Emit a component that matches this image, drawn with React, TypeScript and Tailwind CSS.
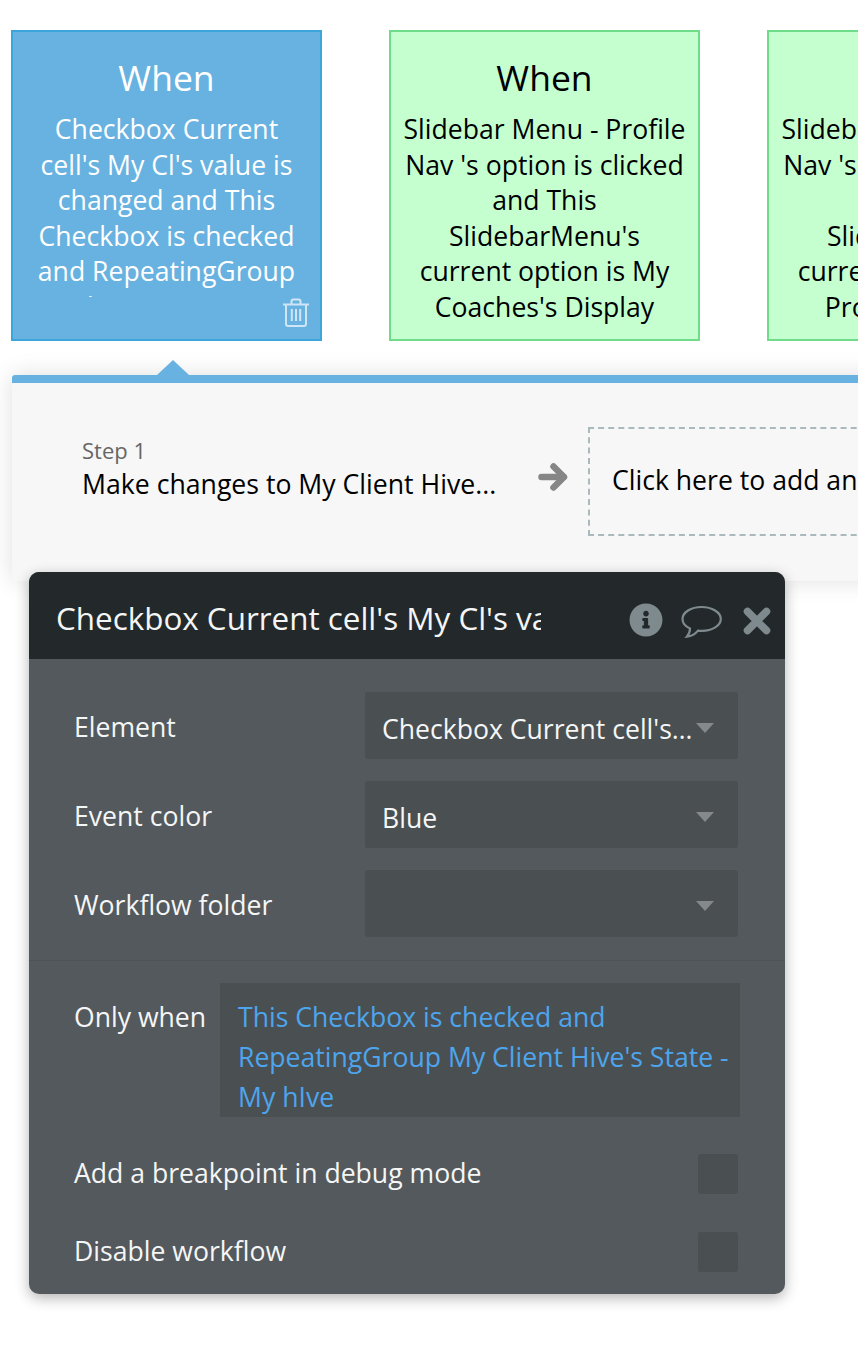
import { FaInfoCircle } from "react-icons/fa";

const cards = [
  {
    lines: ["Slidebar Menu - Profile", "Nav 's option is clicked", "and This", "SlidebarMenu's", "current option is My", "Coaches's Display"],
  },
  {
    lines: ["Slidebar Menu - Profile", "Nav 's option is clicked", "and This", "SlidebarMenu's", "current option is My", "Profile's Display"],
  },
];

function Trash() {
  return (
    <svg viewBox="0 0 26 29" className="absolute right-[11px] bottom-[12px] h-[29px] w-[26px]" fill="none" stroke="#cfe5f4" strokeWidth="2">
      <path d="M0 6.5h26" />
      <path d="M8.5 6V3.2c0-1 .8-1.7 1.7-1.7h5.6c.9 0 1.7.7 1.7 1.7V6" />
      <path d="M3 6.5v19.3c0 1.2 1 2.2 2.2 2.2h15.6c1.2 0 2.2-1 2.2-2.2V6.5" />
      <path d="M8.8 11v12M13 11v12M17.2 11v12" />
    </svg>
  );
}

function Select({ label, value }: { label: string; value?: string }) {
  return (
    <div className="flex h-[67px] items-center justify-between">
      <span className="pt-[4px] text-[26.6px] text-[#f5f6f6]">{label}</span>
      <div className="flex h-[67px] w-[373px] items-center justify-between rounded-[3px] bg-[#4a4f52] pr-[24px] pl-[17px]">
        <span className="min-w-0 truncate pt-[8px] text-[26.6px] text-[#f5f6f6]">{value}</span>
        <span className="mt-[4px] ml-[2px] h-0 w-0 shrink-0 border-x-[9px] border-t-[10px] border-x-transparent border-t-[#85898b]" />
      </div>
    </div>
  );
}

function Check({ label }: { label: string }) {
  return (
    <div className="flex h-[40px] items-center justify-between">
      <span className="text-[26.6px] text-[#f5f6f6]">{label}</span>
      <div className="h-[40px] w-[40px] rounded-[3px] bg-[#4a4f52]" />
    </div>
  );
}

export default function App() {
  return (
    <div className="h-[1372px] w-[858px] overflow-hidden bg-white font-['Open_Sans',sans-serif]">
      <div className="flex gap-[67px] pt-[30px] pl-[11px]">
        <div className="relative h-[311px] w-[311px] shrink-0 border-2 border-[#3ca5da] bg-[#67b2e0] text-center text-white">
          <div className="pt-[23px] text-[35.5px] leading-[44px]">When</div>
          <div className="mt-[13px] h-[185px] overflow-hidden px-[5px] text-[26.6px] leading-[35.6px] whitespace-nowrap">
            <div>Checkbox Current</div>
            <div>cell's My Cl's value is</div>
            <div>changed and This</div>
            <div>Checkbox is checked</div>
            <div>and RepeatingGroup</div>
            <div>My Client Hive's State -</div>
          </div>
          <Trash />
        </div>
        {cards.map((c, i) => (
          <div key={i} className="h-[311px] w-[311px] shrink-0 border-2 border-[#6fdc8a] bg-[#c5ffd0] text-center text-black">
            <div className="pt-[23px] text-[35.5px] leading-[44px]">When</div>
            <div className="mt-[13px] px-[4px] text-[26.6px] leading-[35.6px]">
              {c.lines.map((l) => (
                <div key={l} className="whitespace-nowrap">{l}</div>
              ))}
            </div>
          </div>
        ))}
      </div>

      <div className="mt-[34px] ml-[12px] w-[900px] shadow-[0_0_22px_rgba(0,0,0,0.13)]">
        <div className="relative h-[8px] rounded-tl-[3px] bg-[#67b2e0]">
          <div className="absolute -top-[15px] left-[145px] h-0 w-0 border-x-[16px] border-b-[15px] border-x-transparent border-b-[#67b2e0]" />
        </div>
        <div className="flex h-[198px] items-start bg-[#f7f7f7] pt-[44px] pl-[70px]">
          <div className="w-[414px] shrink-0">
            <div className="pt-[7px] text-[22px] leading-[32px] text-[#666]">Step 1</div>
            <div className="pt-[1px] text-[26.65px] leading-[34px] whitespace-nowrap text-black">Make changes to My Client Hive...</div>
          </div>
          <svg viewBox="0 0 30 30" className="mt-[35px] ml-[42px] h-[30px] w-[30px] shrink-0" fill="none" stroke="#868686" strokeWidth="6.5" strokeLinecap="round" strokeLinejoin="round">
            <path d="M3.5 15h22" />
            <path d="M15.5 4.5L26 15 15.5 25.5" />
          </svg>
          <div className="ml-[20px] flex h-[109px] w-[400px] shrink-0 items-start border-2 border-dashed border-[#a9b9bc] pt-[33px] pl-[22px] text-[26.6px] leading-[36px] whitespace-nowrap text-black">
            Click here to add an action...
          </div>
        </div>
      </div>

      <div className="relative -mt-[9px] ml-[29px] h-[722px] w-[756px] rounded-[10px] bg-[#54595d] shadow-[0_4px_14px_rgba(0,0,0,0.3)]">
        <div className="flex h-[87px] items-center rounded-t-[10px] bg-[#23292b] pl-[27px]">
          <div className="w-[485px] shrink-0 overflow-hidden pt-[4px] text-[31.4px] leading-[40px] whitespace-nowrap text-[#f4f5f5]">
            Checkbox Current cell's My Cl's value is changed
          </div>
          <FaInfoCircle className="mt-[9px] ml-[88px] h-[34px] w-[34px] shrink-0 text-[#7f8a8e]" />
          <svg viewBox="0 0 41 35" className="mt-[14px] ml-[18px] h-[35px] w-[41px] shrink-0" fill="none" stroke="#7f8a8e" strokeWidth="2.2">
            <path d="M20.5 2C10 2 1.5 7.4 1.5 14c0 4 3 7.4 7.5 9.6 0 2.8-1 5.8-3 8 4.5-.4 8.6-3 11-6 1.3.2 2.6.3 3.9.3 10.5 0 18.9-5.3 18.9-11.9S31 2 20.5 2z" />
          </svg>
          <svg viewBox="0 0 28 28" className="mt-[11px] ml-[21px] h-[28px] w-[28px] shrink-0" fill="none" stroke="#7f8a8e" strokeWidth="7.5" strokeLinecap="round">
            <path d="M4.5 4.5l19 19M23.5 4.5l-19 19" />
          </svg>
        </div>

        <div className="flex flex-col gap-[22px] pt-[33px] pr-[47px] pl-[45px]">
          <Select label="Element" value="Checkbox Current cell's My Cl's value" />
          <Select label="Event color" value="Blue" />
          <Select label="Workflow folder" />
        </div>

        <div className="mt-[23px] h-px bg-[#4d5256]" />

        <div className="flex pt-[22px] pl-[45px]">
          <span className="w-[146px] shrink-0 pt-[14px] text-[26.6px] leading-[40px] text-[#f5f6f6]">Only when</span>
          <div className="h-[134px] w-[520px] overflow-hidden bg-[#4a4f52] pt-[14px] pl-[18px] text-[26.6px] leading-[40px] text-[#4da5ed]">
            <div className="whitespace-nowrap">This Checkbox is checked and</div>
            <div className="whitespace-nowrap">RepeatingGroup My Client Hive's State -</div>
            <div className="whitespace-nowrap">My hIve</div>
          </div>
        </div>

        <div className="flex flex-col gap-[38px] pt-[37px] pr-[47px] pl-[45px]">
          <Check label="Add a breakpoint in debug mode" />
          <Check label="Disable workflow" />
        </div>
      </div>
    </div>
  );
}
